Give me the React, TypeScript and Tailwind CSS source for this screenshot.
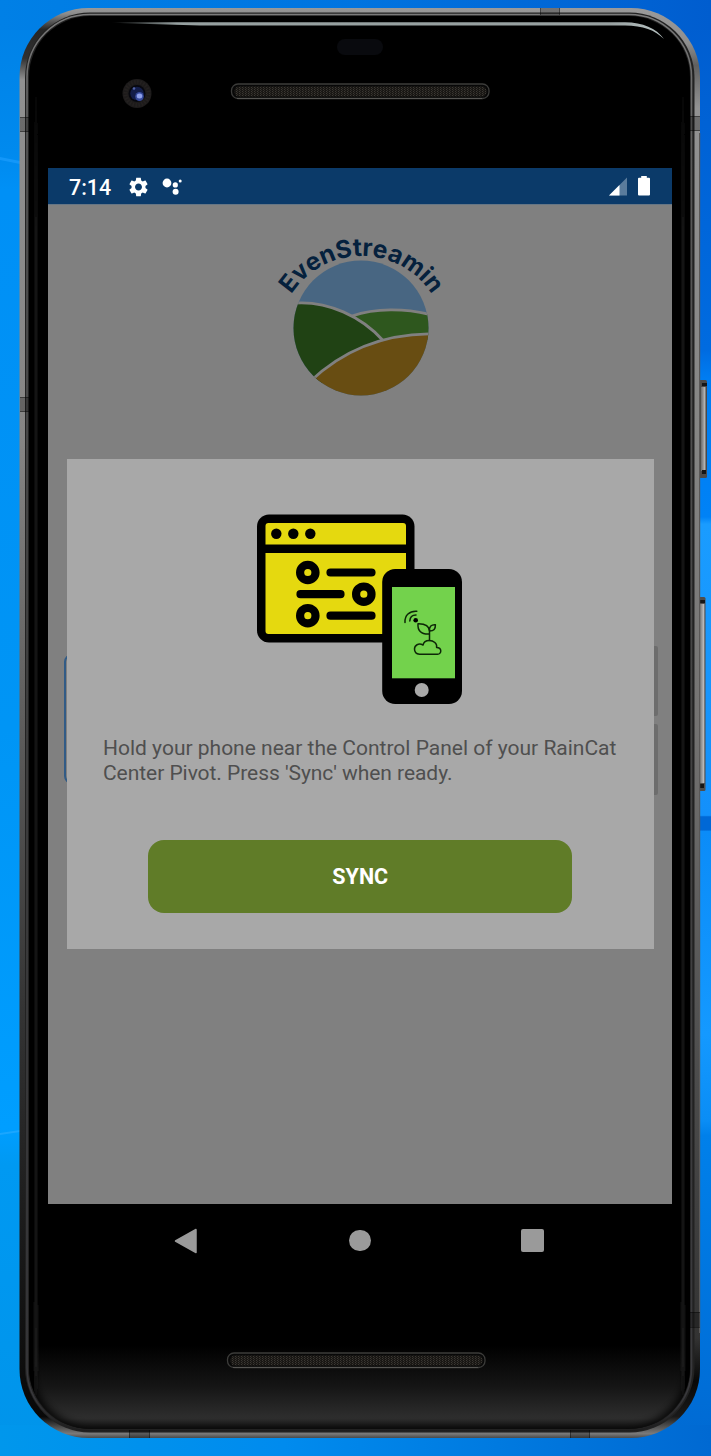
import React from "react";

function Wallpaper() {
  return (
    <svg className="absolute inset-0" width="711" height="1456" viewBox="0 0 711 1456" aria-hidden="true">
      <defs>
        <linearGradient id="wl" x1="0" y1="0" x2="0" y2="1">
          <stop offset="0" stopColor="#0080e6" />
          <stop offset="0.105" stopColor="#008aee" />
          <stop offset="0.13" stopColor="#0090f6" />
          <stop offset="0.5" stopColor="#0095f5" />
          <stop offset="0.775" stopColor="#009eff" />
          <stop offset="0.8" stopColor="#0099f2" />
          <stop offset="1" stopColor="#0094ea" />
        </linearGradient>
        <linearGradient id="wt" x1="0" y1="0" x2="1" y2="0">
          <stop offset="0" stopColor="#0080e6" />
          <stop offset="0.5" stopColor="#0074e0" />
          <stop offset="1" stopColor="#005dcf" />
        </linearGradient>
        <linearGradient id="wb" x1="0" y1="0" x2="1" y2="0">
          <stop offset="0" stopColor="#0097ec" />
          <stop offset="0.4" stopColor="#008bee" />
          <stop offset="1" stopColor="#0069d2" />
        </linearGradient>
        <linearGradient id="wr" x1="0" y1="0" x2="0" y2="1">
          <stop offset="0" stopColor="#005dcf" />
          <stop offset="0.24" stopColor="#006be0" />
          <stop offset="0.26" stopColor="#007df2" />
          <stop offset="0.355" stopColor="#0082f6" />
          <stop offset="0.36" stopColor="#1a9cff" />
          <stop offset="0.56" stopColor="#1390fb" />
          <stop offset="0.561" stopColor="#0068d6" />
          <stop offset="0.57" stopColor="#0068d6" />
          <stop offset="0.571" stopColor="#0b8cf8" />
          <stop offset="0.71" stopColor="#1499ff" />
          <stop offset="0.77" stopColor="#0a8df5" />
          <stop offset="0.78" stopColor="#0080ea" />
          <stop offset="1" stopColor="#0069d2" />
        </linearGradient>
      </defs>
      <rect width="360" height="1456" fill="url(#wl)" />
      <rect x="360" width="351" height="1456" fill="url(#wr)" />
      <rect width="711" height="30" fill="url(#wt)" />
      <rect y="1425" width="711" height="31" fill="url(#wb)" />
      <path d="M0 157 L20 161 V164 L0 160Z" fill="#20a0ff" opacity="0.6" />
      <path d="M0 1133 L20 1130 V1132 L0 1135Z" fill="#35b0ff" opacity="0.5" />
    </svg>
  );
}

function DeviceBody() {
  return (
    <svg className="absolute inset-0" width="711" height="1456" viewBox="0 0 711 1456" aria-hidden="true">
      <defs>
        <linearGradient id="metalL" x1="0" y1="8" x2="0" y2="1438" gradientUnits="userSpaceOnUse">
          <stop offset="0" stopColor="#9a9a9a" />
          <stop offset="0.004" stopColor="#8c8c8c" />
          <stop offset="0.015" stopColor="#262626" />
          <stop offset="0.035" stopColor="#303030" />
          <stop offset="0.05" stopColor="#909090" />
          <stop offset="0.3" stopColor="#868584" />
          <stop offset="0.5" stopColor="#5e5d5c" />
          <stop offset="0.7" stopColor="#343434" />
          <stop offset="0.85" stopColor="#1b1b1b" />
          <stop offset="0.985" stopColor="#080808" />
          <stop offset="0.997" stopColor="#7a7a7a" />
          <stop offset="1" stopColor="#4a4a4a" />
        </linearGradient>
        <linearGradient id="metalR" x1="0" y1="8" x2="0" y2="1438" gradientUnits="userSpaceOnUse">
          <stop offset="0" stopColor="#9a9a9a" />
          <stop offset="0.025" stopColor="#8e8e8e" />
          <stop offset="0.04" stopColor="#606060" />
          <stop offset="0.07" stopColor="#929292" />
          <stop offset="0.3" stopColor="#858584" />
          <stop offset="0.5" stopColor="#747372" />
          <stop offset="0.75" stopColor="#4c4c4c" />
          <stop offset="0.93" stopColor="#333333" />
          <stop offset="0.96" stopColor="#080808" />
          <stop offset="0.985" stopColor="#1a1a1a" />
          <stop offset="0.997" stopColor="#7a7a7a" />
          <stop offset="1" stopColor="#4a4a4a" />
        </linearGradient>
        <linearGradient id="rimLine" x1="0" y1="8" x2="0" y2="1438" gradientUnits="userSpaceOnUse">
          <stop offset="0" stopColor="#7d7d7d" />
          <stop offset="0.1" stopColor="#5a5a5a" />
          <stop offset="0.5" stopColor="#434343" />
          <stop offset="0.97" stopColor="#38383c" />
          <stop offset="1" stopColor="#181818" />
        </linearGradient>
        <linearGradient id="chin" x1="0" y1="1345" x2="0" y2="1428" gradientUnits="userSpaceOnUse">
          <stop offset="0" stopColor="#000000" />
          <stop offset="0.5" stopColor="#151515" />
          <stop offset="0.88" stopColor="#2e2e2e" />
          <stop offset="1" stopColor="#1f1f1f" />
        </linearGradient>
        <linearGradient id="shineTop" x1="110" y1="0" x2="665" y2="0" gradientUnits="userSpaceOnUse">
          <stop offset="0" stopColor="#9aa5a5" stopOpacity="0" />
          <stop offset="0.12" stopColor="#96a0a0" />
          <stop offset="0.9" stopColor="#98a1a1" />
          <stop offset="1" stopColor="#b9c4c4" />
        </linearGradient>
        <linearGradient id="button" x1="0" y1="0" x2="1" y2="0">
          <stop offset="0" stopColor="#6d6d6d" />
          <stop offset="0.45" stopColor="#969696" />
          <stop offset="0.75" stopColor="#b8b8b8" />
          <stop offset="1" stopColor="#555555" />
        </linearGradient>
        <linearGradient id="edgeFade" x1="0" y1="70" x2="0" y2="1400" gradientUnits="userSpaceOnUse">
          <stop offset="0" stopColor="#1c1c1c" stopOpacity="0" />
          <stop offset="0.12" stopColor="#1a1a1a" />
          <stop offset="0.9" stopColor="#1a1a1a" />
          <stop offset="0.97" stopColor="#222222" />
          <stop offset="1" stopColor="#222222" stopOpacity="0" />
        </linearGradient>
        <filter id="soft" x="-20%" y="-20%" width="140%" height="140%">
          <feGaussianBlur stdDeviation="4" />
        </filter>
        <filter id="soft2" x="-200%" y="-5%" width="500%" height="110%">
          <feGaussianBlur stdDeviation="1.2" />
        </filter>
        <clipPath id="left"><rect width="360" height="1456" /></clipPath>
        <clipPath id="right"><rect x="360" width="351" height="1456" /></clipPath>
        <clipPath id="glass"><rect x="29" y="16" width="661" height="1413" rx="61" /></clipPath>
      </defs>
      <rect x="699" y="380" width="8" height="98" rx="1.5" fill="#4c4a48" />
      <rect x="701" y="387" width="5" height="84" fill="url(#button)" />
      <rect x="702" y="383" width="5" height="3" fill="#161616" />
      <rect x="702" y="470" width="4" height="4" fill="#161616" />
      <rect x="698" y="597" width="7.5" height="194" rx="1.5" fill="#504d4b" />
      <rect x="699" y="604" width="6" height="179" fill="url(#button)" />
      <rect x="699" y="600" width="6" height="3" fill="#161616" />
      <rect x="699" y="784" width="5" height="4" fill="#161616" />
      <g clipPath="url(#left)">
        <rect x="19.5" y="8" width="680.5" height="1430" rx="69" fill="url(#metalL)" />
      </g>
      <g clipPath="url(#right)">
        <rect x="19.5" y="8" width="680.5" height="1430" rx="69" fill="url(#metalR)" />
        <rect x="699" y="133" width="1.2" height="1200" fill="#5b5958" />
      </g>
      <rect x="25" y="12.5" width="669.5" height="1420" rx="65" fill="#222222" />
      <rect x="27" y="14.5" width="664.5" height="1416" rx="62.5" fill="none" stroke="url(#rimLine)" strokeWidth="1.6" />
      <g clipPath="url(#glass)">
        <rect x="28" y="15" width="663" height="1414" fill="#000000" />
        <rect x="34" y="1345" width="651" height="84" fill="url(#chin)" />
        <rect x="28" y="1200" width="663" height="231" rx="62" fill="none" stroke="#000000" strokeWidth="9" filter="url(#soft)" />
        <rect x="34.5" y="70" width="3" height="1330" fill="url(#edgeFade)" filter="url(#soft2)" />
        <rect x="681.5" y="70" width="3" height="1330" fill="url(#edgeFade)" filter="url(#soft2)" />
      </g>
      <g fill="#000000" fillOpacity="0.25">
        <rect x="20" y="117" width="9" height="15" />
        <rect x="20" y="397" width="9.500" height="15" />
        <rect x="690" y="116" width="10" height="15" />
        <rect x="540" y="8" width="20" height="7" />
        <rect x="690" y="1312" width="10" height="15" />
        <rect x="129" y="1430" width="21" height="8" />
        <rect x="570" y="1430" width="20" height="8" />
      </g>
      <path
        d="M20 117.500H29M20 131.500H29M20 397.500H30M20 411.500H30M690 116.500H700M690 130.500H700M690 1312.500H700M690 1327.500H700M540.500 8V15M559.500 8V15M129.500 1430V1438M149.500 1430V1438M570.500 1430V1438M589.500 1430V1438"
        stroke="#000000"
        strokeOpacity="0.4"
      />
      <path d="M110 22.5L125 22.2H625C643 22.5 656 28 664 39C655 30 643 25.5 625 25.4H200L125 23.2Z" fill="url(#shineTop)" />
    </svg>
  );
}

function SpeakerGrille({ id }: { id: string }) {
  return (
    <svg width="260" height="17" viewBox="0 0 260 17" aria-hidden="true">
      <defs>
        <pattern id={id} width="3" height="2" patternUnits="userSpaceOnUse">
          <rect width="3" height="2" fill="#191714" />
          <rect width="1" height="1" fill="#3b3833" />
          <rect x="1" y="1" width="1" height="1" fill="#2e2b27" />
        </pattern>
      </defs>
      <rect x="1.500" y="1" width="257.500" height="14.500" rx="6.500" fill="#080808" stroke="#3c3c3a" strokeWidth="1.300" />
      <rect x="4.500" y="3.500" width="252" height="10" rx="4.500" fill={`url(#${id})`} />
      <path d="M7 15.500H252" stroke="#575653" strokeWidth="1" />
    </svg>
  );
}

function FrontCamera() {
  return (
    <svg width="30" height="30" viewBox="0 0 30 30" aria-hidden="true">
      <circle cx="15" cy="15.500" r="14.500" fill="#1d1b1b" />
      <circle cx="15" cy="15.500" r="11.500" fill="none" stroke="#242120" strokeWidth="4" strokeDasharray="1.500 1.500" />
      <circle cx="15" cy="15.500" r="8.500" fill="#07080f" />
      <circle cx="15" cy="15.500" r="6.800" fill="#131d49" />
      <ellipse cx="17.500" cy="18.500" rx="4.300" ry="4.500" fill="#364a9b" />
      <ellipse cx="17.500" cy="18" rx="2.800" ry="2.500" fill="#8ea0ea" />
      <circle cx="12" cy="10.500" r="1.300" fill="#5263a7" />
    </svg>
  );
}

function StatusBar() {
  return (
    <div className="flex h-9 items-center bg-[#0b3a69] pr-[22px] pl-[21px] text-white">
      <span className="w-[60px] pt-[3px] text-[21.4px] leading-9 font-medium">7:14</span>
      <svg width="19" height="20" viewBox="2.200 1.900 19.600 20.200" aria-hidden="true" className="mt-px">
        <path
          fill="#ffffff"
          d="M19.140 12.940c.04-.3.060-.61.060-.94 0-.32-.02-.64-.07-.94l2.030-1.580c.18-.14.230-.41.120-.61l-1.920-3.320c-.12-.22-.37-.29-.59-.22l-2.390.96c-.5-.38-1.030-.7-1.620-.94l-.36-2.540c-.04-.24-.24-.41-.48-.41h-3.840c-.24 0-.43.170-.47.410l-.36 2.540c-.59.240-1.130.570-1.620.94l-2.390-.96c-.22-.08-.47 0-.59.220L2.740 8.870c-.12.210-.08.470.12.610l2.030 1.580c-.05.3-.09.630-.09.940s.02.640.07.940l-2.030 1.580c-.18.140-.23.410-.12.610l1.920 3.320c.12.220.37.290.59.220l2.390-.96c.5.380 1.030.7 1.620.94l.36 2.540c.05.240.24.410.48.410h3.840c.24 0 .44-.17.470-.41l.36-2.540c.59-.24 1.130-.56 1.620-.94l2.390.96c.22.080.47 0 .59-.22l1.920-3.320c.12-.22.070-.47-.12-.61l-2.010-1.580zM12 15.600c-1.980 0-3.600-1.620-3.600-3.600s1.620-3.600 3.600-3.600 3.600 1.620 3.600 3.600-1.620 3.600-3.600 3.600z"
        />
      </svg>
      <svg width="21" height="18" viewBox="0 0 21 18" aria-hidden="true" className="ml-[14px]" fill="#ffffff">
        <circle cx="5" cy="6" r="4.400" />
        <circle cx="13.300" cy="7.900" r="2.600" />
        <circle cx="13.600" cy="14.800" r="3" />
        <circle cx="18.200" cy="3.900" r="1.500" />
      </svg>
      <span className="flex-1" />
      <svg width="19" height="19" viewBox="0 0 19 19" aria-hidden="true">
        <path d="M0 18.500L18 0.500V18.500Z" fill="#5b7c9c" />
        <path d="M0 18.500L10.500 8V18.500Z" fill="#ffffff" />
      </svg>
      <svg width="12" height="20" viewBox="0 0 12 20" aria-hidden="true" className="ml-[10px]">
        <path d="M3.200 0H8.800V1.700H11Q12 1.700 12 2.700V18.500Q12 19.500 11 19.500H1Q0 19.500 0 18.500V2.700Q0 1.700 1 1.700H3.200Z" fill="#ffffff" />
      </svg>
    </div>
  );
}

function Logo() {
  return (
    <svg width="200" height="185" viewBox="0 0 200 185" role="img" aria-label="EvenStreamin">
      <defs>
        <clipPath id="disc"><circle cx="101" cy="103" r="67.500" /></clipPath>
        <path id="arc" d="M18 114.500A83.500 83.500 0 0 1 185 114.500" />
      </defs>
      <g clipPath="url(#disc)">
        <rect x="30" y="33" width="140" height="140" fill="#486682" />
        <path d="M92 91C115 83 145 83 172 90V115H120Z" fill="#2e571e" />
        <path d="M30 79C68 75 103 93 123 115L60 160L20 155Z" fill="#204214" />
        <path d="M50 157C80 128 120 108 175 109V180H50Z" fill="#684d12" />
        <path d="M92 91C115 83 145 83 172 90" fill="none" stroke="#808080" strokeWidth="2.800" />
        <path d="M30 78.500C68 74 103 93 123 115.500" fill="none" stroke="#808080" strokeWidth="2.800" />
        <path d="M50 156.500C80 128 120 108 175 108.800" fill="none" stroke="#808080" strokeWidth="2.800" />
      </g>
      <text fill="#05213d" fontFamily="Inter, sans-serif" fontWeight="700" fontSize="24.500">
        <textPath href="#arc" startOffset="50%" textAnchor="middle" textLength="167" lengthAdjust="spacing">
          EvenStreamin
        </textPath>
      </text>
    </svg>
  );
}

function SyncIllustration() {
  return (
    <svg width="230" height="215" viewBox="0 0 230 215" aria-hidden="true">
      <rect x="12" y="14.500" width="157.500" height="128" rx="12" fill="#000000" />
      <path d="M23.500 23H158Q161 23 161 26V44.500H20.500V26Q20.500 23 23.500 23Z" fill="#e5d90f" />
      <path d="M20.500 53H161V134H23.500Q20.500 134 20.500 131Z" fill="#e5d90f" />
      <circle cx="31.300" cy="33.800" r="5.200" />
      <circle cx="48.300" cy="33.800" r="5.200" />
      <circle cx="65.300" cy="33.800" r="5.200" />
      <g fill="none" stroke="#000000" strokeWidth="8.200">
        <circle cx="62.800" cy="72.500" r="7.700" />
        <circle cx="118.800" cy="94.200" r="7.700" />
        <circle cx="62.800" cy="115.700" r="7.700" />
        <path strokeLinecap="round" d="M85.500 72.500H126.500M55.500 94.200H95.500M85.500 115.700H126.500" />
      </g>
      <rect x="137.200" y="69" width="79.800" height="135" rx="13" fill="#000000" />
      <rect x="147" y="87" width="63" height="91.300" fill="#73d24c" />
      <circle cx="176.700" cy="190" r="7" fill="#a9a9a9" />
      <circle cx="170.700" cy="120.200" r="2.300" />
      <g fill="none" stroke="#0d2707" strokeWidth="1.500" strokeLinecap="round" strokeLinejoin="round">
        <path d="M160 122.500C159.500 115.500 164.500 110.700 171.800 111.300" />
        <path d="M164.800 121C165 117 167.500 115 171 115" />
        <path d="M184.500 140.500V131C184.200 126.500 181 123.500 173 123.700C172.500 130 175.500 134.500 184.500 134" />
        <path d="M184.500 130.500C184 126.500 186.500 124.300 190.400 124.700C190.500 129 189 131 184.500 131" />
        <path d="M174.500 154.300H192.500C197 154 197 147.500 191.600 147.500C192.500 143.500 188.500 140.400 184.300 140.400C181 140.400 178.500 142.500 178 145C173.500 142.500 169.500 145.500 169.500 149C169.500 152 171.500 154 174.500 154.300Z" />
      </g>
    </svg>
  );
}

function SyncDialog() {
  return (
    <section role="dialog" className="relative mt-[49px] ml-[18.500px] flex h-[490px] w-[587.500px] flex-col items-center bg-[#a8a8a8] pt-[41px]">
      <div className="h-[215px] w-full pl-[178.500px]">
        <SyncIllustration />
      </div>
      <p className="mt-[21px] h-[50px] w-full pl-[36.500px] text-[21px] leading-[25px] whitespace-nowrap text-[#4f4f4f]">
        Hold your phone near the Control Panel of your RainCat
        <br />
        <span className="tracking-[-0.05px]">Center Pivot. Press 'Sync' when ready.</span>
      </p>
      <button className="mt-[54px] h-[72.500px] w-[424px] rounded-[16px] bg-[#607c28] pt-[2px] text-[21.500px] font-bold text-white">
        SYNC
      </button>
    </section>
  );
}

function NavigationBar() {
  return (
    <nav className="flex h-[73px] items-center pl-[126px]">
      <svg width="24" height="26" viewBox="0 0 24 26" aria-hidden="true">
        <path d="M22 1.500V24.500L1.500 13Z" fill="#9a9a9a" stroke="#9a9a9a" strokeWidth="1.500" strokeLinejoin="round" />
      </svg>
      <span className="ml-[151px] size-[21.500px] rounded-full bg-[#9a9a9a]" />
      <span className="ml-[150px] size-[23px] rounded-[2px] bg-[#9a9a9a]" />
    </nav>
  );
}

export default function App() {
  return (
    <main className="relative h-[1456px] w-[711px] overflow-hidden font-['Roboto',sans-serif]">
      <Wallpaper />
      <DeviceBody />
      <div className="relative ml-12 flex w-[624px] flex-col">
        <header className="flex h-[168px] flex-col items-start">
          <span className="mt-[39px] ml-[289px] h-4 w-[46px] rounded-full bg-[#090a0e]" />
          <div className="mt-[23px] flex items-start">
            <span className="ml-[74px]">
              <FrontCamera />
            </span>
            <span className="mt-[5px] ml-[78px]">
              <SpeakerGrille id="grille-top" />
            </span>
          </div>
        </header>
        <div className="relative h-[1036px] bg-[#808080]">
          <StatusBar />
          <div className="h-px bg-[#667685]" />
          <div className="mt-[20px] h-[185px] pl-[212px]">
            <Logo />
          </div>
          <span className="absolute top-[486px] left-[16px] h-[130px] w-[20px] rounded-[8px] border-2 border-[#315b86]" />
          <span className="absolute top-[478px] left-[590px] h-[70px] w-[20px] rounded-[2px] bg-[#6d6d6d]" />
          <span className="absolute top-[556px] left-[590px] h-[71px] w-[20px] rounded-[2px] bg-[#6d6d6d]" />
          <SyncDialog />
        </div>
        <NavigationBar />
        <div className="mt-[75px] pl-[177.500px]">
          <SpeakerGrille id="grille-bottom" />
        </div>
      </div>
    </main>
  );
}
